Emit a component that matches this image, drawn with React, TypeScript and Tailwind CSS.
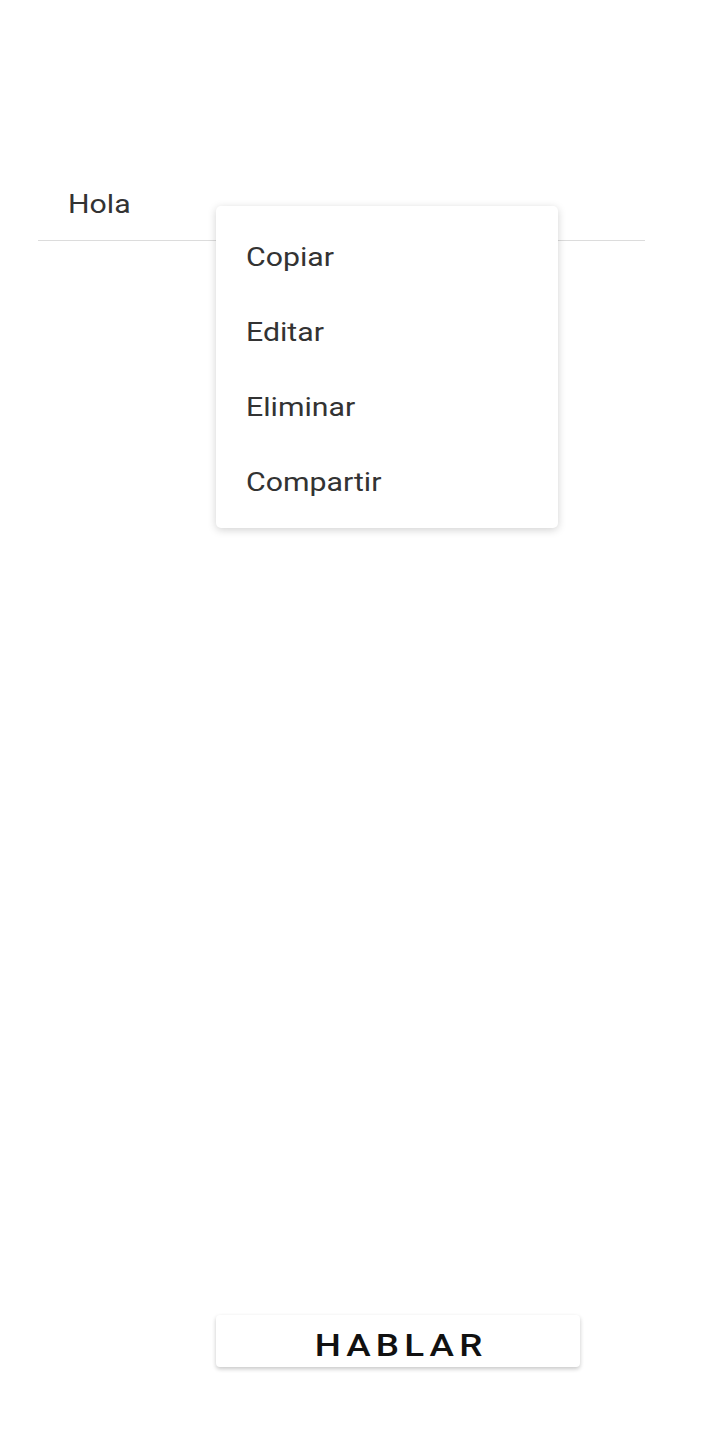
import React from "react";

const menuItems = ["Copiar", "Editar", "Eliminar", "Compartir"];

export default function App() {
  return (
    <div
      className="relative flex h-[1435px] w-[720px] flex-col bg-white"
      style={{ fontFamily: "Roboto, 'Noto Sans', sans-serif" }}
    >
      {/* Text field */}
      <div className="ml-[38px] mr-[75px] border-b border-[#dcdcdc] pt-[190px] pb-[20px]">
        <div className="h-[30px] pl-[30px] text-[25px] leading-[30px] text-[#333333]">
          <span className="inline-block origin-left scale-x-[1.21]">Hola</span>
        </div>
      </div>

      {/* Context menu */}
      <div className="absolute left-[216px] top-[206px] w-[342px] rounded-[5px] bg-white pt-[14px] pb-[8px] shadow-[0_2px_8px_rgba(0,0,0,0.18)]">
        {menuItems.map((item) => (
          <div
            key={item}
            className="flex h-[75px] items-center pl-[30px] text-[25px] leading-[30px] text-[#333333]"
          >
            <span className="inline-block origin-left scale-x-[1.21]">{item}</span>
          </div>
        ))}
      </div>

      {/* Talk button */}
      <div className="mt-auto mb-[68px] ml-[216px]">
        <button className="flex h-[52px] w-[364px] items-center justify-center rounded-[4px] bg-white pt-[8px] pl-[6px] text-[32px] font-medium text-[#111111] shadow-[0_2px_4px_rgba(0,0,0,0.22)]">
          <span className="inline-block scale-x-[1.15] tracking-[0.14em]">HABLAR</span>
        </button>
      </div>
    </div>
  );
}
